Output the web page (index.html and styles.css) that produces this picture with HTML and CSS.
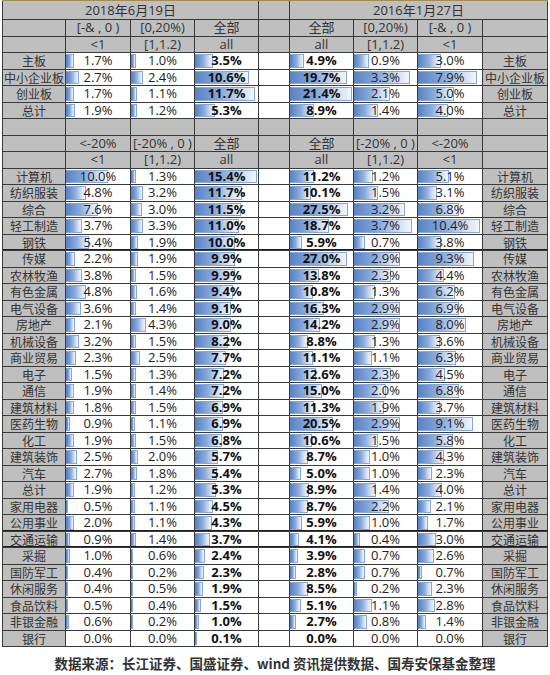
FILE: index.html
```html
<!DOCTYPE html>
<html lang="zh-CN">
<head>
<meta charset="utf-8">
<title>行业估值分布</title>
<link rel="stylesheet" href="styles.css">
</head>
<body>
<div class="sheet">
  <div class="row hdr">
    <div class="c span4">2018年6月19日</div>
    <div class="c"></div>
    <div class="c span4">2016年1月27日</div>
  </div>
  <div class="row hdr">
    <div class="c"></div><div class="c">[-&amp; , 0 )</div><div class="c">[0,20%)</div><div class="c">全部</div><div class="c"></div><div class="c">全部</div><div class="c">[0,20%)</div><div class="c">[-&amp; , 0 )</div><div class="c"></div>
  </div>
  <div class="row hdr">
    <div class="c"></div><div class="c">&lt;1</div><div class="c">[1,1.2)</div><div class="c">all</div><div class="c"></div><div class="c">all</div><div class="c">[1,1.2)</div><div class="c">&lt;1</div><div class="c"></div>
  </div>

  <div class="row">
    <div class="lab">主板</div>
    <div class="d"><i class="bar" style="width:8px"></i><span>1.7%</span></div>
    <div class="d"><i class="bar" style="width:5px"></i><span>1.0%</span></div>
    <div class="d b"><i class="bar" style="width:18px"></i><span>3.5%</span></div>
    <div class="d"></div>
    <div class="d b"><i class="bar" style="width:14px"></i><span>4.9%</span></div>
    <div class="d"><i class="bar" style="width:15px"></i><span>0.9%</span></div>
    <div class="d"><i class="bar" style="width:23px"></i><span>3.0%</span></div>
    <div class="lab">主板</div>
  </div>
  <div class="row">
    <div class="lab">中小企业板</div>
    <div class="d"><i class="bar" style="width:13px"></i><span>2.7%</span></div>
    <div class="d"><i class="bar" style="width:12px"></i><span>2.4%</span></div>
    <div class="d b"><i class="bar" style="width:54px"></i><span>10.6%</span></div>
    <div class="d"></div>
    <div class="d b"><i class="bar" style="width:57px"></i><span>19.7%</span></div>
    <div class="d"><i class="bar" style="width:56px"></i><span>3.3%</span></div>
    <div class="d"><i class="bar" style="width:59px"></i><span>7.9%</span></div>
    <div class="lab">中小企业板</div>
  </div>
  <div class="row">
    <div class="lab">创业板</div>
    <div class="d"><i class="bar" style="width:8px"></i><span>1.7%</span></div>
    <div class="d"><i class="bar" style="width:6px"></i><span>1.1%</span></div>
    <div class="d b"><i class="bar" style="width:60px"></i><span>11.7%</span></div>
    <div class="d"></div>
    <div class="d b"><i class="bar" style="width:62px"></i><span>21.4%</span></div>
    <div class="d"><i class="bar" style="width:36px"></i><span>2.1%</span></div>
    <div class="d"><i class="bar" style="width:36px"></i><span>5.0%</span></div>
    <div class="lab">创业板</div>
  </div>
  <div class="row">
    <div class="lab">总计</div>
    <div class="d"><i class="bar" style="width:9px"></i><span>1.9%</span></div>
    <div class="d"><i class="bar" style="width:6px"></i><span>1.2%</span></div>
    <div class="d b"><i class="bar" style="width:20px"></i><span>5.3%</span></div>
    <div class="d"></div>
    <div class="d b"><i class="bar" style="width:24px"></i><span>8.9%</span></div>
    <div class="d"><i class="bar" style="width:24px"></i><span>1.4%</span></div>
    <div class="d"><i class="bar" style="width:30px"></i><span>4.0%</span></div>
    <div class="lab">总计</div>
  </div>

  <div class="row hdr">
    <div class="c"></div><div class="c"></div><div class="c"></div><div class="c"></div><div class="c"></div><div class="c"></div><div class="c"></div><div class="c"></div><div class="c"></div>
  </div>
  <div class="row hdr">
    <div class="c"></div><div class="c">&lt;-20%</div><div class="c">[-20% , 0 )</div><div class="c">全部</div><div class="c"></div><div class="c">全部</div><div class="c">[-20% , 0 )</div><div class="c">&lt;-20%</div><div class="c"></div>
  </div>
  <div class="row hdr">
    <div class="c"></div><div class="c">&lt;1</div><div class="c">[1,1.2)</div><div class="c">all</div><div class="c"></div><div class="c">all</div><div class="c">[1,1.2)</div><div class="c">&lt;1</div><div class="c"></div>
  </div>

  <div class="row">
    <div class="lab">计算机</div>
    <div class="d"><i class="bar" style="width:42px"></i><span>10.0%</span></div>
    <div class="d"><i class="bar" style="width:5px"></i><span>1.3%</span></div>
    <div class="d b"><i class="bar" style="width:62px"></i><span>15.4%</span></div>
    <div class="d"></div>
    <div class="d b"><i class="bar" style="width:24px"></i><span>11.2%</span></div>
    <div class="d"><i class="bar" style="width:19px"></i><span>1.2%</span></div>
    <div class="d"><i class="bar" style="width:31px"></i><span>5.1%</span></div>
    <div class="lab">计算机</div>
  </div>
  <div class="row">
    <div class="lab">纺织服装</div>
    <div class="d"><i class="bar" style="width:20px"></i><span>4.8%</span></div>
    <div class="d"><i class="bar" style="width:12px"></i><span>3.2%</span></div>
    <div class="d b"><i class="bar" style="width:47px"></i><span>11.7%</span></div>
    <div class="d"></div>
    <div class="d b"><i class="bar" style="width:21px"></i><span>10.1%</span></div>
    <div class="d"><i class="bar" style="width:24px"></i><span>1.5%</span></div>
    <div class="d"><i class="bar" style="width:19px"></i><span>3.1%</span></div>
    <div class="lab">纺织服装</div>
  </div>
  <div class="row">
    <div class="lab">综合</div>
    <div class="d"><i class="bar" style="width:32px"></i><span>7.6%</span></div>
    <div class="d"><i class="bar" style="width:11px"></i><span>3.0%</span></div>
    <div class="d b"><i class="bar" style="width:46px"></i><span>11.5%</span></div>
    <div class="d"></div>
    <div class="d b"><i class="bar" style="width:58px"></i><span>27.5%</span></div>
    <div class="d"><i class="bar" style="width:51px"></i><span>3.2%</span></div>
    <div class="d"><i class="bar" style="width:41px"></i><span>6.8%</span></div>
    <div class="lab">综合</div>
  </div>
  <div class="row">
    <div class="lab">轻工制造</div>
    <div class="d"><i class="bar" style="width:16px"></i><span>3.7%</span></div>
    <div class="d"><i class="bar" style="width:12px"></i><span>3.3%</span></div>
    <div class="d b"><i class="bar" style="width:44px"></i><span>11.0%</span></div>
    <div class="d"></div>
    <div class="d b"><i class="bar" style="width:39px"></i><span>18.7%</span></div>
    <div class="d"><i class="bar" style="width:58px"></i><span>3.7%</span></div>
    <div class="d"><i class="bar" style="width:62px"></i><span>10.4%</span></div>
    <div class="lab">轻工制造</div>
  </div>
  <div class="row thick">
    <div class="lab">钢铁</div>
    <div class="d"><i class="bar" style="width:23px"></i><span>5.4%</span></div>
    <div class="d"><i class="bar" style="width:7px"></i><span>1.9%</span></div>
    <div class="d b"><i class="bar" style="width:40px"></i><span>10.0%</span></div>
    <div class="d"></div>
    <div class="d b"><i class="bar" style="width:12px"></i><span>5.9%</span></div>
    <div class="d"><i class="bar" style="width:11px"></i><span>0.7%</span></div>
    <div class="d"><i class="bar" style="width:23px"></i><span>3.8%</span></div>
    <div class="lab">钢铁</div>
  </div>
  <div class="row">
    <div class="lab">传媒</div>
    <div class="d"><i class="bar" style="width:9px"></i><span>2.2%</span></div>
    <div class="d"><i class="bar" style="width:7px"></i><span>1.9%</span></div>
    <div class="d b"><i class="bar" style="width:40px"></i><span>9.9%</span></div>
    <div class="d"></div>
    <div class="d b"><i class="bar" style="width:57px"></i><span>27.0%</span></div>
    <div class="d"><i class="bar" style="width:46px"></i><span>2.9%</span></div>
    <div class="d"><i class="bar" style="width:56px"></i><span>9.3%</span></div>
    <div class="lab">传媒</div>
  </div>
  <div class="row">
    <div class="lab">农林牧渔</div>
    <div class="d"><i class="bar" style="width:16px"></i><span>3.8%</span></div>
    <div class="d"><i class="bar" style="width:5px"></i><span>1.5%</span></div>
    <div class="d b"><i class="bar" style="width:40px"></i><span>9.9%</span></div>
    <div class="d"></div>
    <div class="d b"><i class="bar" style="width:29px"></i><span>13.8%</span></div>
    <div class="d"><i class="bar" style="width:37px"></i><span>2.3%</span></div>
    <div class="d"><i class="bar" style="width:26px"></i><span>4.4%</span></div>
    <div class="lab">农林牧渔</div>
  </div>
  <div class="row">
    <div class="lab">有色金属</div>
    <div class="d"><i class="bar" style="width:20px"></i><span>4.8%</span></div>
    <div class="d"><i class="bar" style="width:6px"></i><span>1.6%</span></div>
    <div class="d b"><i class="bar" style="width:38px"></i><span>9.4%</span></div>
    <div class="d"></div>
    <div class="d b"><i class="bar" style="width:23px"></i><span>10.8%</span></div>
    <div class="d"><i class="bar" style="width:21px"></i><span>1.3%</span></div>
    <div class="d"><i class="bar" style="width:37px"></i><span>6.2%</span></div>
    <div class="lab">有色金属</div>
  </div>
  <div class="row">
    <div class="lab">电气设备</div>
    <div class="d"><i class="bar" style="width:15px"></i><span>3.6%</span></div>
    <div class="d"><i class="bar" style="width:5px"></i><span>1.4%</span></div>
    <div class="d b"><i class="bar" style="width:36px"></i><span>9.1%</span></div>
    <div class="d"></div>
    <div class="d b"><i class="bar" style="width:34px"></i><span>16.3%</span></div>
    <div class="d"><i class="bar" style="width:46px"></i><span>2.9%</span></div>
    <div class="d"><i class="bar" style="width:41px"></i><span>6.9%</span></div>
    <div class="lab">电气设备</div>
  </div>
  <div class="row">
    <div class="lab">房地产</div>
    <div class="d"><i class="bar" style="width:9px"></i><span>2.1%</span></div>
    <div class="d"><i class="bar" style="width:15px"></i><span>4.3%</span></div>
    <div class="d b"><i class="bar" style="width:36px"></i><span>9.0%</span></div>
    <div class="d"></div>
    <div class="d b"><i class="bar" style="width:30px"></i><span>14.2%</span></div>
    <div class="d"><i class="bar" style="width:46px"></i><span>2.9%</span></div>
    <div class="d"><i class="bar" style="width:48px"></i><span>8.0%</span></div>
    <div class="lab">房地产</div>
  </div>
  <div class="row">
    <div class="lab">机械设备</div>
    <div class="d"><i class="bar" style="width:13px"></i><span>3.2%</span></div>
    <div class="d"><i class="bar" style="width:5px"></i><span>1.5%</span></div>
    <div class="d b"><i class="bar" style="width:33px"></i><span>8.2%</span></div>
    <div class="d"></div>
    <div class="d b"><i class="bar" style="width:18px"></i><span>8.8%</span></div>
    <div class="d"><i class="bar" style="width:21px"></i><span>1.3%</span></div>
    <div class="d"><i class="bar" style="width:22px"></i><span>3.6%</span></div>
    <div class="lab">机械设备</div>
  </div>
  <div class="row">
    <div class="lab">商业贸易</div>
    <div class="d"><i class="bar" style="width:10px"></i><span>2.3%</span></div>
    <div class="d"><i class="bar" style="width:9px"></i><span>2.5%</span></div>
    <div class="d b"><i class="bar" style="width:31px"></i><span>7.7%</span></div>
    <div class="d"></div>
    <div class="d b"><i class="bar" style="width:23px"></i><span>11.1%</span></div>
    <div class="d"><i class="bar" style="width:18px"></i><span>1.1%</span></div>
    <div class="d"><i class="bar" style="width:38px"></i><span>6.3%</span></div>
    <div class="lab">商业贸易</div>
  </div>
  <div class="row">
    <div class="lab">电子</div>
    <div class="d"><i class="bar" style="width:6px"></i><span>1.5%</span></div>
    <div class="d"><i class="bar" style="width:5px"></i><span>1.3%</span></div>
    <div class="d b"><i class="bar" style="width:29px"></i><span>7.2%</span></div>
    <div class="d"></div>
    <div class="d b"><i class="bar" style="width:26px"></i><span>12.6%</span></div>
    <div class="d"><i class="bar" style="width:37px"></i><span>2.3%</span></div>
    <div class="d"><i class="bar" style="width:27px"></i><span>4.5%</span></div>
    <div class="lab">电子</div>
  </div>
  <div class="row">
    <div class="lab">通信</div>
    <div class="d"><i class="bar" style="width:8px"></i><span>1.9%</span></div>
    <div class="d"><i class="bar" style="width:5px"></i><span>1.4%</span></div>
    <div class="d b"><i class="bar" style="width:29px"></i><span>7.2%</span></div>
    <div class="d"></div>
    <div class="d b"><i class="bar" style="width:32px"></i><span>15.0%</span></div>
    <div class="d"><i class="bar" style="width:32px"></i><span>2.0%</span></div>
    <div class="d"><i class="bar" style="width:41px"></i><span>6.8%</span></div>
    <div class="lab">通信</div>
  </div>
  <div class="row">
    <div class="lab">建筑材料</div>
    <div class="d"><i class="bar" style="width:8px"></i><span>1.8%</span></div>
    <div class="d"><i class="bar" style="width:5px"></i><span>1.5%</span></div>
    <div class="d b"><i class="bar" style="width:28px"></i><span>6.9%</span></div>
    <div class="d"></div>
    <div class="d b"><i class="bar" style="width:24px"></i><span>11.3%</span></div>
    <div class="d"><i class="bar" style="width:30px"></i><span>1.9%</span></div>
    <div class="d"><i class="bar" style="width:22px"></i><span>3.7%</span></div>
    <div class="lab">建筑材料</div>
  </div>
  <div class="row">
    <div class="lab">医药生物</div>
    <div class="d"><i class="bar" style="width:4px"></i><span>0.9%</span></div>
    <div class="d"><i class="bar" style="width:4px"></i><span>1.1%</span></div>
    <div class="d b"><i class="bar" style="width:28px"></i><span>6.9%</span></div>
    <div class="d"></div>
    <div class="d b"><i class="bar" style="width:43px"></i><span>20.5%</span></div>
    <div class="d"><i class="bar" style="width:46px"></i><span>2.9%</span></div>
    <div class="d"><i class="bar" style="width:55px"></i><span>9.1%</span></div>
    <div class="lab">医药生物</div>
  </div>
  <div class="row">
    <div class="lab">化工</div>
    <div class="d"><i class="bar" style="width:8px"></i><span>1.9%</span></div>
    <div class="d"><i class="bar" style="width:5px"></i><span>1.5%</span></div>
    <div class="d b"><i class="bar" style="width:27px"></i><span>6.8%</span></div>
    <div class="d"></div>
    <div class="d b"><i class="bar" style="width:22px"></i><span>10.6%</span></div>
    <div class="d"><i class="bar" style="width:24px"></i><span>1.5%</span></div>
    <div class="d"><i class="bar" style="width:35px"></i><span>5.8%</span></div>
    <div class="lab">化工</div>
  </div>
  <div class="row">
    <div class="lab">建筑装饰</div>
    <div class="d"><i class="bar" style="width:11px"></i><span>2.5%</span></div>
    <div class="d"><i class="bar" style="width:7px"></i><span>2.0%</span></div>
    <div class="d b"><i class="bar" style="width:23px"></i><span>5.7%</span></div>
    <div class="d"></div>
    <div class="d b"><i class="bar" style="width:18px"></i><span>8.7%</span></div>
    <div class="d"><i class="bar" style="width:16px"></i><span>1.0%</span></div>
    <div class="d"><i class="bar" style="width:26px"></i><span>4.3%</span></div>
    <div class="lab">建筑装饰</div>
  </div>
  <div class="row">
    <div class="lab">汽车</div>
    <div class="d"><i class="bar" style="width:11px"></i><span>2.7%</span></div>
    <div class="d"><i class="bar" style="width:6px"></i><span>1.8%</span></div>
    <div class="d b"><i class="bar" style="width:22px"></i><span>5.4%</span></div>
    <div class="d"></div>
    <div class="d b"><i class="bar" style="width:11px"></i><span>5.0%</span></div>
    <div class="d"><i class="bar" style="width:16px"></i><span>1.0%</span></div>
    <div class="d"><i class="bar" style="width:14px"></i><span>2.3%</span></div>
    <div class="lab">汽车</div>
  </div>
  <div class="row">
    <div class="lab">总计</div>
    <div class="d"><i class="bar" style="width:8px"></i><span>1.9%</span></div>
    <div class="d"><i class="bar" style="width:4px"></i><span>1.2%</span></div>
    <div class="d b"><i class="bar" style="width:21px"></i><span>5.3%</span></div>
    <div class="d"></div>
    <div class="d b"><i class="bar" style="width:19px"></i><span>8.9%</span></div>
    <div class="d"><i class="bar" style="width:22px"></i><span>1.4%</span></div>
    <div class="d"><i class="bar" style="width:24px"></i><span>4.0%</span></div>
    <div class="lab">总计</div>
  </div>
  <div class="row">
    <div class="lab">家用电器</div>
    <div class="d"><i class="bar" style="width:2px"></i><span>0.5%</span></div>
    <div class="d"><i class="bar" style="width:4px"></i><span>1.1%</span></div>
    <div class="d b"><i class="bar" style="width:18px"></i><span>4.5%</span></div>
    <div class="d"></div>
    <div class="d b"><i class="bar" style="width:18px"></i><span>8.7%</span></div>
    <div class="d"><i class="bar" style="width:35px"></i><span>2.2%</span></div>
    <div class="d"><i class="bar" style="width:13px"></i><span>2.1%</span></div>
    <div class="lab">家用电器</div>
  </div>
  <div class="row thick">
    <div class="lab">公用事业</div>
    <div class="d"><i class="bar" style="width:8px"></i><span>2.0%</span></div>
    <div class="d"><i class="bar" style="width:4px"></i><span>1.1%</span></div>
    <div class="d b"><i class="bar" style="width:17px"></i><span>4.3%</span></div>
    <div class="d"></div>
    <div class="d b"><i class="bar" style="width:12px"></i><span>5.9%</span></div>
    <div class="d"><i class="bar" style="width:16px"></i><span>1.0%</span></div>
    <div class="d"><i class="bar" style="width:10px"></i><span>1.7%</span></div>
    <div class="lab">公用事业</div>
  </div>
  <div class="row thick">
    <div class="lab">交通运输</div>
    <div class="d"><i class="bar" style="width:4px"></i><span>0.9%</span></div>
    <div class="d"><i class="bar" style="width:5px"></i><span>1.4%</span></div>
    <div class="d b"><i class="bar" style="width:15px"></i><span>3.7%</span></div>
    <div class="d"></div>
    <div class="d b"><i class="bar" style="width:9px"></i><span>4.1%</span></div>
    <div class="d"><i class="bar" style="width:6px"></i><span>0.4%</span></div>
    <div class="d"><i class="bar" style="width:18px"></i><span>3.0%</span></div>
    <div class="lab">交通运输</div>
  </div>
  <div class="row">
    <div class="lab">采掘</div>
    <div class="d"><i class="bar" style="width:4px"></i><span>1.0%</span></div>
    <div class="d"><i class="bar" style="width:2px"></i><span>0.6%</span></div>
    <div class="d b"><i class="bar" style="width:10px"></i><span>2.4%</span></div>
    <div class="d"></div>
    <div class="d b"><i class="bar" style="width:8px"></i><span>3.9%</span></div>
    <div class="d"><i class="bar" style="width:11px"></i><span>0.7%</span></div>
    <div class="d"><i class="bar" style="width:16px"></i><span>2.6%</span></div>
    <div class="lab">采掘</div>
  </div>
  <div class="row">
    <div class="lab">国防军工</div>
    <div class="d"><i class="bar" style="width:2px"></i><span>0.4%</span></div>
    <div class="d"><i class="bar" style="width:1px"></i><span>0.2%</span></div>
    <div class="d b"><i class="bar" style="width:9px"></i><span>2.3%</span></div>
    <div class="d"></div>
    <div class="d b"><i class="bar" style="width:6px"></i><span>2.8%</span></div>
    <div class="d"><i class="bar" style="width:11px"></i><span>0.7%</span></div>
    <div class="d"><i class="bar" style="width:4px"></i><span>0.7%</span></div>
    <div class="lab">国防军工</div>
  </div>
  <div class="row">
    <div class="lab">休闲服务</div>
    <div class="d"><i class="bar" style="width:2px"></i><span>0.4%</span></div>
    <div class="d"><i class="bar" style="width:2px"></i><span>0.5%</span></div>
    <div class="d b"><i class="bar" style="width:8px"></i><span>1.9%</span></div>
    <div class="d"></div>
    <div class="d b"><i class="bar" style="width:18px"></i><span>8.5%</span></div>
    <div class="d"><i class="bar" style="width:3px"></i><span>0.2%</span></div>
    <div class="d"><i class="bar" style="width:14px"></i><span>2.3%</span></div>
    <div class="lab">休闲服务</div>
  </div>
  <div class="row">
    <div class="lab">食品饮料</div>
    <div class="d"><i class="bar" style="width:2px"></i><span>0.5%</span></div>
    <div class="d"><i class="bar" style="width:1px"></i><span>0.4%</span></div>
    <div class="d b"><i class="bar" style="width:6px"></i><span>1.5%</span></div>
    <div class="d"></div>
    <div class="d b"><i class="bar" style="width:11px"></i><span>5.1%</span></div>
    <div class="d"><i class="bar" style="width:18px"></i><span>1.1%</span></div>
    <div class="d"><i class="bar" style="width:17px"></i><span>2.8%</span></div>
    <div class="lab">食品饮料</div>
  </div>
  <div class="row">
    <div class="lab">非银金融</div>
    <div class="d"><i class="bar" style="width:3px"></i><span>0.6%</span></div>
    <div class="d"><i class="bar" style="width:1px"></i><span>0.2%</span></div>
    <div class="d b"><i class="bar" style="width:4px"></i><span>1.0%</span></div>
    <div class="d"></div>
    <div class="d b"><i class="bar" style="width:6px"></i><span>2.7%</span></div>
    <div class="d"><i class="bar" style="width:13px"></i><span>0.8%</span></div>
    <div class="d"><i class="bar" style="width:8px"></i><span>1.4%</span></div>
    <div class="lab">非银金融</div>
  </div>
  <div class="row">
    <div class="lab">银行</div>
    <div class="d"><span>0.0%</span></div>
    <div class="d"><span>0.0%</span></div>
    <div class="d b"><i class="bar" style="width:1px"></i><span>0.1%</span></div>
    <div class="d"></div>
    <div class="d b"><span>0.0%</span></div>
    <div class="d"><span>0.0%</span></div>
    <div class="d"><span>0.0%</span></div>
    <div class="lab">银行</div>
  </div>
</div>
<p class="src">数据来源：长江证券、国盛证券、wind 资讯提供数据、国寿安保基金整理</p>
</body>
</html>
```
FILE: styles.css
```css
body {
  margin: 0;
  background: #ffffff;
  font-family: "Open Sans", "Noto Sans CJK SC", sans-serif;
  color: #222222;
}

.sheet {
  display: grid;
  width: max-content;
  margin-left: 2px;
  grid-template-columns: 62px 64px 63px 63px 30px 63px 63px 64px 64px;
  grid-template-rows: 18px repeat(38, 15.5px);
  gap: 1px;
  padding: 0 1px 1px;
  background: #3a3a3a;
  border-top: 1px solid #a38c4e;
}

.row {
  display: contents;
}

.hdr > .c {
  background: #bfbfbf;
  display: flex;
  align-items: center;
  justify-content: center;
  font-size: 13px;
  line-height: 15px;
  color: #333333;
  white-space: nowrap;
}

.span4 {
  grid-column: span 4;
}

.lab {
  background: #bfbfbf;
  display: flex;
  align-items: center;
  justify-content: center;
  font-family: "Noto Sans CJK SC", sans-serif;
  font-size: 12px;
  line-height: 15px;
  color: #333333;
  white-space: nowrap;
  overflow: hidden;
}

.d {
  background: #ffffff;
  display: grid;
  font-size: 13px;
  line-height: 15px;
}

.d > * {
  grid-area: 1 / 1;
}

.d > span {
  align-self: center;
  text-align: center;
  position: relative;
}

.b > span {
  font-weight: 700;
  color: #111111;
}

.bar {
  display: block;
  justify-self: start;
  align-self: stretch;
  margin: 1px 0;
  box-sizing: border-box;
  background: linear-gradient(to right, #5a84c6 0%, #8aabdd 45%, #d3e0f3 80%, #f3f6fc 100%);
  border: 1px solid #86a7dc;
  border-left-color: #5a84c6;
}

.thick > div {
  box-shadow: inset 0 -1px 0 #1e1e1e;
}

.src {
  margin: 6px 0 0;
  text-align: center;
  font-family: "Noto Sans CJK SC", sans-serif;
  font-size: 13.5px;
  font-weight: 700;
  color: #333333;
}
```
